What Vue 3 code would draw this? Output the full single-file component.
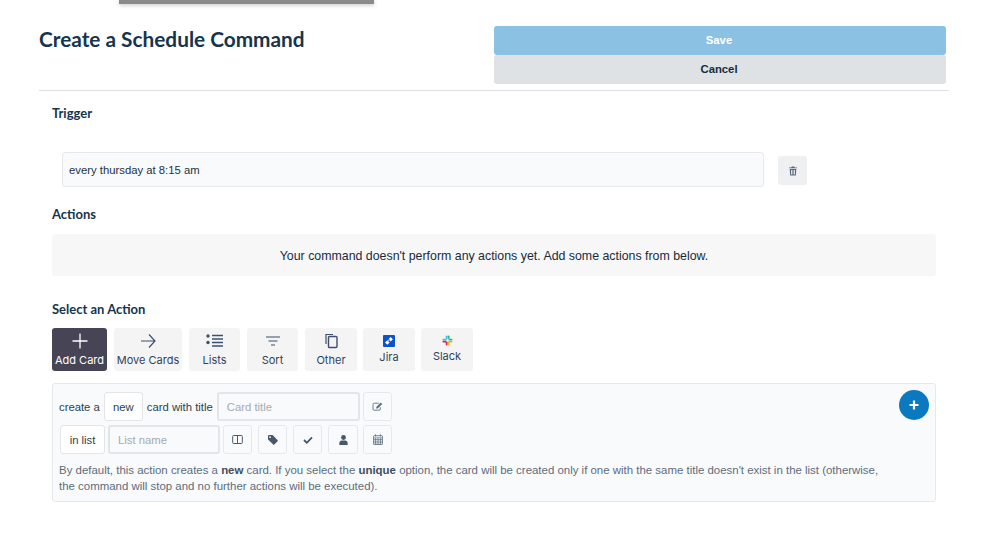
<template>
  <div class="page">
    <div class="topbar"></div>
    <header class="head">
      <h1>Create a Schedule Command</h1>
      <div class="head-actions">
        <button class="btn save">Save</button>
        <button class="btn cancel">Cancel</button>
      </div>
    </header>
    <main class="body">
      <h2 class="trigger-title">Trigger</h2>
      <div class="trigger-row">
        <div class="trigger-input">every thursday at 8:15 am</div>
        <button class="trash" aria-label="Delete">
          <svg width="8" height="10" viewBox="0 0 9 11"><path d="M3 0.5h3l.5 1H9v1H0v-1h2.5zM.8 3.2h7.4l-.5 7.3H1.300zM2.400 4.500v4.800h1V4.500zM4.100 4.500v4.800h.8V4.500zM5.600 4.500v4.800h1V4.500z" fill="#566a7c" fill-rule="evenodd"/></svg>
        </button>
      </div>
      <h2 class="actions-title">Actions</h2>
      <div class="empty">Your command doesn't perform any actions yet. Add some actions from below.</div>
      <h2 class="select-title">Select an Action</h2>
      <div class="tabs">
        <button class="tab active w55">
          <svg width="16" height="16" viewBox="0 0 16 16"><path d="M8 0.500v15M0.500 8h15" stroke="#fff" stroke-width="1.300" fill="none"/></svg>
          <span>Add Card</span>
        </button>
        <button class="tab w68">
          <svg width="16" height="16" viewBox="0 0 16 16"><path d="M1 8h14M9 1.500L15 8l-6 6.500" stroke="#3d4f70" stroke-width="1.200" fill="none"/></svg>
          <span>Move Cards</span>
        </button>
        <button class="tab w51">
          <svg width="17" height="16" viewBox="0 0 17 16"><path d="M6 2.500h11M6 6h11M6 9.500h11M6 13h11" stroke="#3d4f70" stroke-width="1.300"/><circle cx="2" cy="3" r="1.700" fill="#3d4f70"/><circle cx="2" cy="9.500" r="1.700" fill="#3d4f70"/></svg>
          <span>Lists</span>
        </button>
        <button class="tab w51">
          <svg width="14" height="16" viewBox="0 0 14 16"><path d="M0 4h14M2.500 8h9M5 12h4" stroke="#3d4f70" stroke-width="1.200"/></svg>
          <span>Sort</span>
        </button>
        <button class="tab w52">
          <svg width="13" height="16" viewBox="0 0 13 16"><path d="M1 11V1.500h7" stroke="#3d4f70" stroke-width="1.200" fill="none"/><rect x="3.500" y="3.500" width="8.500" height="11" rx="1" stroke="#3d4f70" stroke-width="1.400" fill="none"/></svg>
          <span>Other</span>
        </button>
        <button class="tab w52 brand">
          <svg width="12" height="12" viewBox="0 0 12 12"><rect width="12" height="12" rx="1" fill="#0b52cc"/><path d="M2 7.500l2.300-2.300 2.300 2.300-2.300 2.300zM5.500 4.300l2.200-2.200 2.200 2.200-2.200 2.200z" fill="#fff"/><path d="M4.500 6.500l2.500-2.500" stroke="#9dc0f5" stroke-width="1"/></svg>
          <span>Jira</span>
        </button>
        <button class="tab w52 brand">
          <svg width="11" height="11" viewBox="0 0 11 11"><rect x="0.500" y="3.800" width="4" height="1.700" rx=".8" fill="#36c5f0"/><rect x="3.800" y="0.500" width="1.700" height="4" rx=".8" fill="#36c5f0"/><rect x="6.500" y="3.800" width="4" height="1.700" rx=".8" fill="#2eb67d"/><rect x="5.800" y="0.500" width="1.700" height="3.500" rx=".8" fill="#2eb67d"/><rect x="6.500" y="5.800" width="4" height="1.700" rx=".8" fill="#ecb22e"/><rect x="5.800" y="6.500" width="1.700" height="4" rx=".8" fill="#ecb22e"/><rect x="0.500" y="5.800" width="4" height="1.700" rx=".8" fill="#e01e5a"/><rect x="3.800" y="6.500" width="1.700" height="4" rx=".8" fill="#e01e5a"/></svg>
          <span>Slack</span>
        </button>
      </div>
      <section class="panel">
        <button class="add" aria-label="Add">
          <svg width="10" height="10" viewBox="0 0 10 10"><path d="M5 .5v9M.5 5h9" stroke="#fff" stroke-width="2.200"/></svg>
        </button>
        <div class="row first">
          <span class="lead">create a</span>
          <button class="pick new">new</button>
          <span class="mid">card with title</span>
          <div class="field title">Card title</div>
          <button class="ico">
            <svg width="11" height="9" viewBox="0 0 13 11"><path d="M8 1.500H2.500A1.500 1.500 0 0 0 1 3v5.500A1.500 1.500 0 0 0 2.500 10h6A1.500 1.500 0 0 0 10 8.500V6.500" stroke="#5d6f80" stroke-width="1.100" fill="none"/><path d="M5 6l5.500-5.500 1.800 1.800L6.800 7.800H5z" fill="#5d6f80"/></svg>
          </button>
        </div>
        <div class="row second">
          <button class="pick inlist">in list</button>
          <div class="field list">List name</div>
          <button class="ico">
            <svg width="11" height="9" viewBox="0 0 13 11"><rect x=".6" y=".6" width="11.800" height="9.800" rx="1.200" stroke="#46596b" stroke-width="1.200" fill="none"/><path d="M6.500 .6v9.800" stroke="#46596b" stroke-width="1.200"/></svg>
          </button>
          <button class="ico gap">
            <svg width="10" height="10" viewBox="0 0 13 13"><path d="M0 1.500A1.500 1.500 0 0 1 1.500 0H6l6.500 6.800a1 1 0 0 1 0 1.400L8.200 12.500a1 1 0 0 1-1.400 0L0 5.700zM2.700 1.700a1.100 1.100 0 1 0 .01 0z" fill="#46596b" fill-rule="evenodd"/></svg>
          </button>
          <button class="ico gap">
            <svg width="10" height="8" viewBox="0 0 12 10"><path d="M1 5l3.500 3.500L11 1.700" stroke="#46596b" stroke-width="2.300" fill="none"/></svg>
          </button>
          <button class="ico gap wide">
            <svg width="9" height="10" viewBox="0 0 10 12"><circle cx="5" cy="3" r="2.900" fill="#46596b"/><path d="M0 12V9.500C0 7.500 1.500 6.500 3 6.500h4c1.500 0 3 1 3 3V12z" fill="#46596b"/></svg>
          </button>
          <button class="ico gap5">
            <svg width="10" height="11" viewBox="0 0 12 13"><path d="M3 .5v2M9 .5v2" stroke="#5d6f80" stroke-width="1.400"/><rect x=".5" y="2" width="11" height="10.500" rx="1" stroke="#5d6f80" fill="none"/><path d="M.5 4.500h11M.5 6.500h11M.5 8.500h11M.5 10.500h11M3 4.500v8M6 4.500v8M9 4.500v8" stroke="#5d6f80" stroke-width=".8"/></svg>
          </button>
        </div>
        <p class="help">By default, this action creates a <b>new</b> card. If you select the <b>unique</b> option, the card will be created only if one with the same title doesn't exist in the list (otherwise, the command will stop and no further actions will be executed).</p>
      </section>
    </main>
  </div>
</template>

<script setup>
</script>

<style>
html, body { margin: 0; background: #fff; }
</style>

<style scoped>
.page {
  position: relative;
  width: 999px;
  height: 559px;
  overflow: hidden;
  background: #fff;
  color: #172b3f;
  font-family: "Liberation Sans", Arial, sans-serif;
  font-size: 11.3px;
  box-sizing: border-box;
  padding: 26px 50px 0 39px;
}
.topbar {
  position: absolute;
  left: 119px;
  top: 0;
  width: 255px;
  height: 4px;
  background: #8a8a8a;
  box-shadow: 0 1px 4px rgba(0, 0, 0, .25);
}
button { font-family: inherit; border: 0; padding: 0; cursor: pointer; box-sizing: border-box; }
h1, h2, p { margin: 0; }
.head {
  display: flex;
  justify-content: space-between;
  align-items: flex-start;
  height: 64px;
  border-bottom: 1px solid #dcdfe3;
}
h1 {
  font: 700 20.8px/26px Lato, sans-serif;
  color: #15354d;
}
.head-actions { width: 452px; margin-right: 3px; display: flex; flex-direction: column; }
.btn {
  height: 29px;
  padding: 0 2px 2px 0;
  border-radius: 3px;
  font-size: 11.3px;
  font-weight: 700;
}
.save { background: #8bc2e3; color: #fff; }
.cancel { background: #dfe2e5; color: #172b3f; }
.body { padding: 14px 13px 0 13px; }
h2 {
  font: 700 13px/17px Lato, sans-serif;
  color: #15354d;
}
.trigger-row {
  display: flex;
  align-items: center;
  margin: 30px 0 0 10px;
}
.trigger-input {
  width: 702px;
  height: 35px;
  box-sizing: border-box;
  display: flex;
  align-items: center;
  padding-left: 6px;
  background: #f9fafc;
  border: 1px solid #e6e8eb;
  border-radius: 3px;
  color: #1c3144;
}
.trash {
  margin: 2px 0 0 14px;
  width: 29px;
  height: 29px;
  border-radius: 3px;
  background: #eff0f2;
  display: flex;
  align-items: center;
  justify-content: center;
}
.actions-title { margin-top: 19px; }
.empty {
  margin-top: 11px;
  height: 42px;
  width: 884px;
  background: #f7f7f7;
  border-radius: 3px;
  display: flex;
  align-items: center;
  justify-content: center;
  padding-top: 1px;
  box-sizing: border-box;
  font-size: 12.36px;
  color: #172b3f;
}
.select-title { margin-top: 25px; }
.tabs { display: flex; gap: 7px; margin-top: 10px; }
.tab {
  height: 43px;
  background: #f4f4f5;
  border-radius: 3px;
  display: flex;
  flex-direction: column;
  align-items: center;
  padding-top: 5px;
  font: 11px/14px Inter, sans-serif;
  color: #2f4459;
}
.tab svg { flex-shrink: 0; }
.tab span { margin-top: 4px; white-space: nowrap; }
.tab.brand { padding-top: 7px; margin-left: -1px; }
.tab.brand span { margin-top: 3px; }
.w55 { width: 55px; }
.w68 { width: 68px; }
.w51 { width: 51px; }
.w52 { width: 52px; }
.active { background: #474456; color: #fff; }
.panel {
  position: relative;
  margin-top: 12px;
  width: 884px;
  height: 119px;
  box-sizing: border-box;
  background: #f9fafc;
  border: 1px solid #e6e8eb;
  border-radius: 3px;
  padding: 8px 6px 0 6px;
}
.add {
  position: absolute;
  right: 6px;
  top: 6px;
  width: 30px;
  height: 30px;
  border-radius: 50%;
  background: #0a79bf;
  display: flex;
  align-items: center;
  justify-content: center;
}
.row { display: flex; align-items: center; color: #2a3f52; }
.first { height: 29px; }
.second { height: 29px; margin-top: 4px; }
.pick {
  height: 29px;
  background: #fff;
  border: 1px solid #e3e5e8;
  border-radius: 3px;
  font-size: 11.3px;
  color: #2a3f52;
}
.new { width: 39px; margin: 0 4px 0 4px; }
.inlist { width: 45px; margin-left: 1px; }
.field {
  height: 29px;
  box-sizing: border-box;
  border: 2px solid #e3e5e8;
  border-radius: 3px;
  background: #f9fafc;
  display: flex;
  align-items: center;
  padding-left: 8px;
  color: #a3abb3;
}
.title { width: 143px; margin-left: 4px; }
.list { width: 112px; margin-left: 3px; }
.ico {
  width: 29px;
  height: 29px;
  margin-left: 3px;
  background: #f9fafc;
  border: 1px solid #e6e8eb;
  border-radius: 3px;
  display: flex;
  align-items: center;
  justify-content: center;
}
.gap { margin-left: 6px; }
.wide { width: 30px; }
.gap5 { margin-left: 5px; }
.help {
  margin-top: 8px;
  width: 830px;
  font-size: 11.45px;
  line-height: 16px;
  color: #5e6c7b;
}
.help b { color: #3f5062; }
</style>
